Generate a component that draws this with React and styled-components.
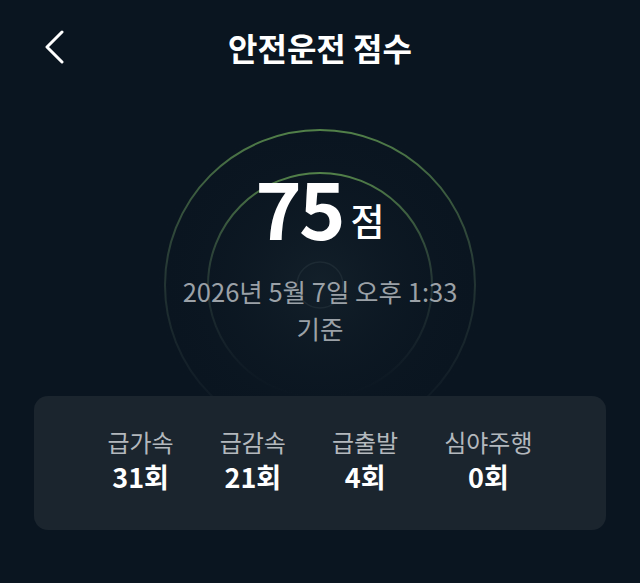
import React from 'react';
import styled, { createGlobalStyle } from 'styled-components';

const GlobalStyle = createGlobalStyle`
    html, body {
        margin: 0;
        padding: 0;
        background: #0a1520;
    }
    body {
        font-family: "Noto Sans CJK KR", "Noto Sans", sans-serif;
        color: #ffffff;
    }
`;

const Page = styled.div`
    width: 640px;
    height: 583px;
    background: #0a1520;
    overflow: hidden;
`;

const Header = styled.header`
    display: grid;
    grid-template-columns: 96px 1fr 96px;
    align-items: center;
    height: 94px;
`;

const BackButton = styled.button`
    display: flex;
    align-items: center;
    justify-content: flex-start;
    padding: 0 0 0 43px;
    height: 40px;
    background: none;
    border: 0;
    color: #ffffff;
    cursor: pointer;
`;

const Title = styled.h1`
    margin: 0;
    text-align: center;
    font-size: 32px;
    font-weight: 700;
    letter-spacing: 0;
`;

const ScoreArea = styled.section`
    position: relative;
    height: 302px;
    display: flex;
    flex-direction: column;
    align-items: center;
`;

const Rings = styled.svg`
    position: absolute;
    left: 0;
    top: 0;
    pointer-events: none;
`;

const ScoreLine = styled.div`
    position: relative;
    display: flex;
    align-items: baseline;
    gap: 8px;
    margin-top: 72px;
`;

const ScoreValue = styled.span`
    font-size: 79px;
    font-weight: 700;
    line-height: 1;
    letter-spacing: -3px;
`;

const ScoreUnit = styled.span`
    position: relative;
    top: -4px;
    font-size: 37px;
    font-weight: 500;
    line-height: 1;
`;

const Updated = styled.p`
    position: relative;
    display: flex;
    flex-direction: column;
    align-items: center;
    margin: 27px 0 0;
    font-size: 25.5px;
    line-height: 37px;
    color: #9ba1a7;
`;

const StatsCard = styled.div`
    display: flex;
    justify-content: center;
    align-items: center;
    gap: 46px;
    margin: 0 34px;
    height: 134px;
    border-radius: 14px;
    background: #1b252e;
`;

const Stat = styled.div`
    display: flex;
    flex-direction: column;
    align-items: center;
    gap: 4px;
    margin-top: -6px;
`;

const StatLabel = styled.span`
    font-size: 24px;
    line-height: 30px;
    color: #b3b8bd;
`;

const StatValue = styled.span`
    font-size: 27px;
    line-height: 32px;
    font-weight: 700;
    color: #ffffff;
`;

const stats = [
    { label: '급가속', count: 31 },
    { label: '급감속', count: 21 },
    { label: '급출발', count: 4 },
    { label: '심야주행', count: 0 },
];

const ChevronLeft = () => (
    <svg width="22" height="34" viewBox="0 0 22 34" fill="none">
        <path
            d="M19 2 L4 17 L19 32"
            stroke="#ffffff"
            strokeWidth="3"
            strokeLinecap="round"
            strokeLinejoin="round"
        />
    </svg>
);

const RingDecoration = () => (
    <Rings width="640" height="302" viewBox="0 0 640 302">
        <defs>
            <linearGradient id="ringFade" x1="0" y1="0" x2="0" y2="1">
                <stop offset="0" stopColor="#5f9450" stopOpacity="0.85" />
                <stop offset="0.45" stopColor="#3d5646" stopOpacity="0.55" />
                <stop offset="0.8" stopColor="#2c3a3f" stopOpacity="0.25" />
                <stop offset="1" stopColor="#1c2730" stopOpacity="0" />
            </linearGradient>
            <radialGradient id="glow" cx="0.5" cy="0.5" r="0.5">
                <stop offset="0" stopColor="#14212b" stopOpacity="0.9" />
                <stop offset="1" stopColor="#0a1520" stopOpacity="0" />
            </radialGradient>
        </defs>
        <circle cx="320" cy="191" r="170" fill="url(#glow)" />
        <circle cx="320" cy="191" r="155" stroke="url(#ringFade)" strokeWidth="2" fill="none" />
        <circle cx="320" cy="191" r="112" stroke="url(#ringFade)" strokeWidth="2" fill="none" />
        <circle cx="320" cy="191" r="23" stroke="#2a3840" strokeOpacity="0.5" strokeWidth="1.5" fill="none" />
    </Rings>
);

const App = () => (
    <Page>
        <GlobalStyle />
        <Header>
            <BackButton aria-label="뒤로">
                <ChevronLeft />
            </BackButton>
            <Title>안전운전 점수</Title>
            <span />
        </Header>

        <ScoreArea>
            <RingDecoration />
            <ScoreLine>
                <ScoreValue>75</ScoreValue>
                <ScoreUnit>점</ScoreUnit>
            </ScoreLine>
            <Updated>
                <span>2026년 5월 7일 오후 1:33</span>
                <span>기준</span>
            </Updated>
        </ScoreArea>

        <StatsCard>
            {stats.map(stat => (
                <Stat key={stat.label}>
                    <StatLabel>{stat.label}</StatLabel>
                    <StatValue>{stat.count}회</StatValue>
                </Stat>
            ))}
        </StatsCard>
    </Page>
);

export default App;
